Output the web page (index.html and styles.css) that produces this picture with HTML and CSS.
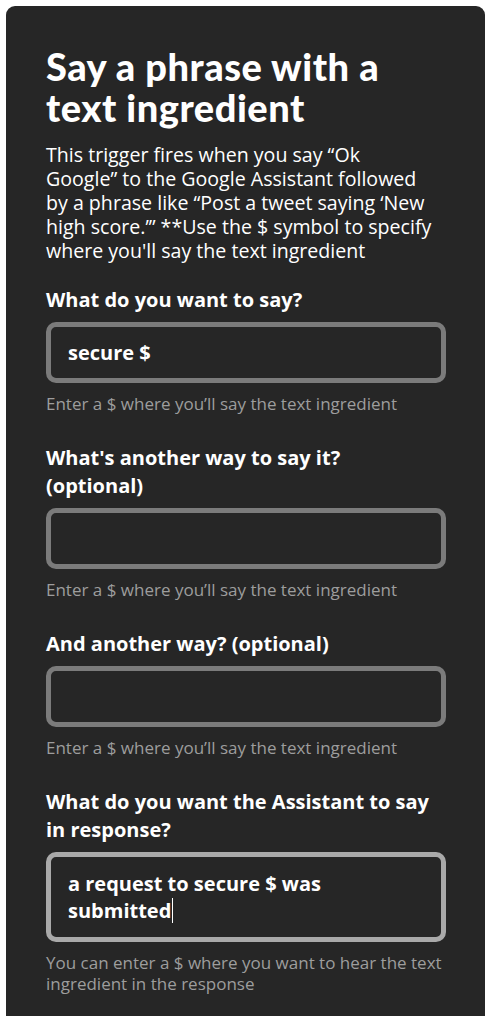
FILE: index.html
```html
<!DOCTYPE html>
<html>
<head>
<meta charset="utf-8">
<link rel="stylesheet" href="styles.css">
</head>
<body>
<main class="card">
  <h1 class="title">Say a phrase with a text ingredient</h1>
  <p class="desc">This trigger fires when you say “Ok Google” to the Google Assistant followed by a phrase like “Post a tweet saying ‘New high score.’” **Use the $ symbol to specify where you'll say the text ingredient</p>

  <div class="field">
    <label class="label">What do you want to say?</label>
    <div class="input">secure $</div>
    <div class="help">Enter a $ where you’ll say the text ingredient</div>
  </div>

  <div class="field">
    <label class="label">What's another way to say it? (optional)</label>
    <div class="input"></div>
    <div class="help">Enter a $ where you’ll say the text ingredient</div>
  </div>

  <div class="field">
    <label class="label">And another way? (optional)</label>
    <div class="input"></div>
    <div class="help">Enter a $ where you’ll say the text ingredient</div>
  </div>

  <div class="field">
    <label class="label">What do you want the Assistant to say in response?</label>
    <div class="input focused">a request to secure $ was submitted<span class="caret"></span></div>
    <div class="help">You can enter a $ where you want to hear the text ingredient in the response</div>
  </div>
</main>
</body>
</html>
```

FILE: styles.css
```css
html, body {
  margin: 0;
  padding: 0;
  background: #ffffff;
}
body {
  font-family: "Open Sans", Lato, sans-serif;
  color: #ffffff;
  padding: 6px 2px 0 6px;
}
.card {
  display: flex;
  flex-direction: column;
  background: #262626;
  border-radius: 9px 9px 0 0;
  padding: 40px 39px 60px 40px;
  min-height: 1100px;
  box-sizing: border-box;
}
.title {
  margin: 0;
  font-family: Lato, "Open Sans", sans-serif;
  font-size: 38px;
  line-height: 41px;
  font-weight: 900;
  letter-spacing: 0.5px;
}
.desc {
  margin: 15px 0 0;
  max-width: 386px;
  font-size: 19.6px;
  line-height: 24px;
  font-weight: 400;
}
.field {
  display: flex;
  flex-direction: column;
  margin-top: 23px;
}
.field + .field {
  margin-top: 30px;
}
.label {
  max-width: 394px;
  font-size: 20px;
  line-height: 28px;
  font-weight: 700;
  margin-bottom: 8px;
}
.input {
  border: 5px solid #7b7b7b;
  border-radius: 10px;
  padding: 12px 17px;
  min-height: 27px;
  font-size: 20px;
  line-height: 27px;
  font-weight: 700;
}
.input.focused {
  border-color: #a9a9a9;
  padding-right: 60px;
  padding-top: 13px;
  padding-bottom: 13px;
}
.caret {
  display: inline-block;
  width: 1px;
  height: 25px;
  background: #ffffff;
  vertical-align: -5px;
  margin-left: 1px;
}
.help {
  margin-top: 10px;
  font-size: 17px;
  line-height: 21px;
  color: #9d9d9d;
}
```
